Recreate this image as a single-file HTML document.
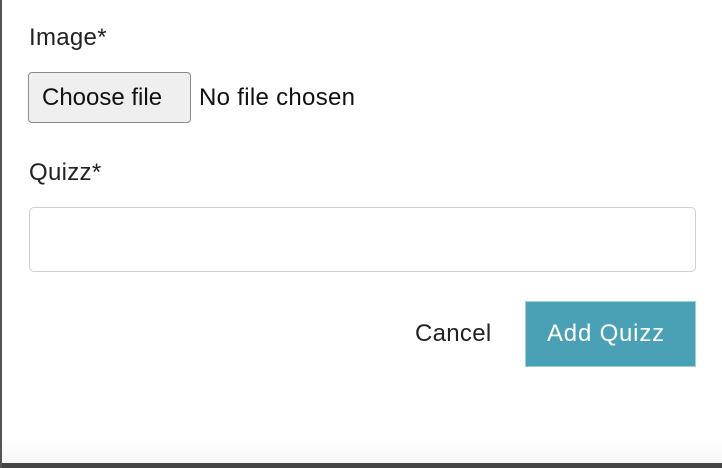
<!DOCTYPE html>
<html><head><style>
body{margin:0;width:722px;height:468px;background:#fff;position:relative;overflow:hidden;font-family:"Liberation Sans",sans-serif;color:#222;}
.lb{position:absolute;left:0;top:0;width:2px;height:468px;background:#555;}
.bb{position:absolute;left:0;top:463px;width:722px;height:5px;background:#444;}
.fade{position:absolute;left:0;top:440px;width:722px;height:23px;background:linear-gradient(#fff,#f6f6f6);}
.t{position:absolute;font-size:24px;white-space:nowrap;letter-spacing:0.3px;}
.cf{position:absolute;left:28px;top:72px;width:161px;height:49px;border:1px solid #8a8a8a;border-radius:4px;background:#efefef;}
.inp{position:absolute;left:29px;top:207px;width:665px;height:63px;border:1px solid #d0d0d0;border-radius:5px;}
.btn{position:absolute;left:525px;top:301px;width:171px;height:66px;background:#4aa1b6;border:1px solid #9cd0dc;box-sizing:border-box;}
</style></head><body>
<div class="fade"></div>
<div class="bb"></div>
<div class="lb"></div>
<div class="t" style="left:29px;top:24px">Image*</div>
<div class="cf"></div>
<div class="t" style="left:42px;top:84px;color:#111;letter-spacing:0">Choose file</div>
<div class="t" style="left:199px;top:84px;color:#111">No file chosen</div>
<div class="t" style="left:29px;top:159px">Quizz*</div>
<div class="inp"></div>
<div class="t" style="left:415px;top:320px">Cancel</div>
<div class="btn"></div>
<div class="t" style="left:547px;top:320px;color:#fff;letter-spacing:0.8px">Add Quizz</div>
</body></html>
